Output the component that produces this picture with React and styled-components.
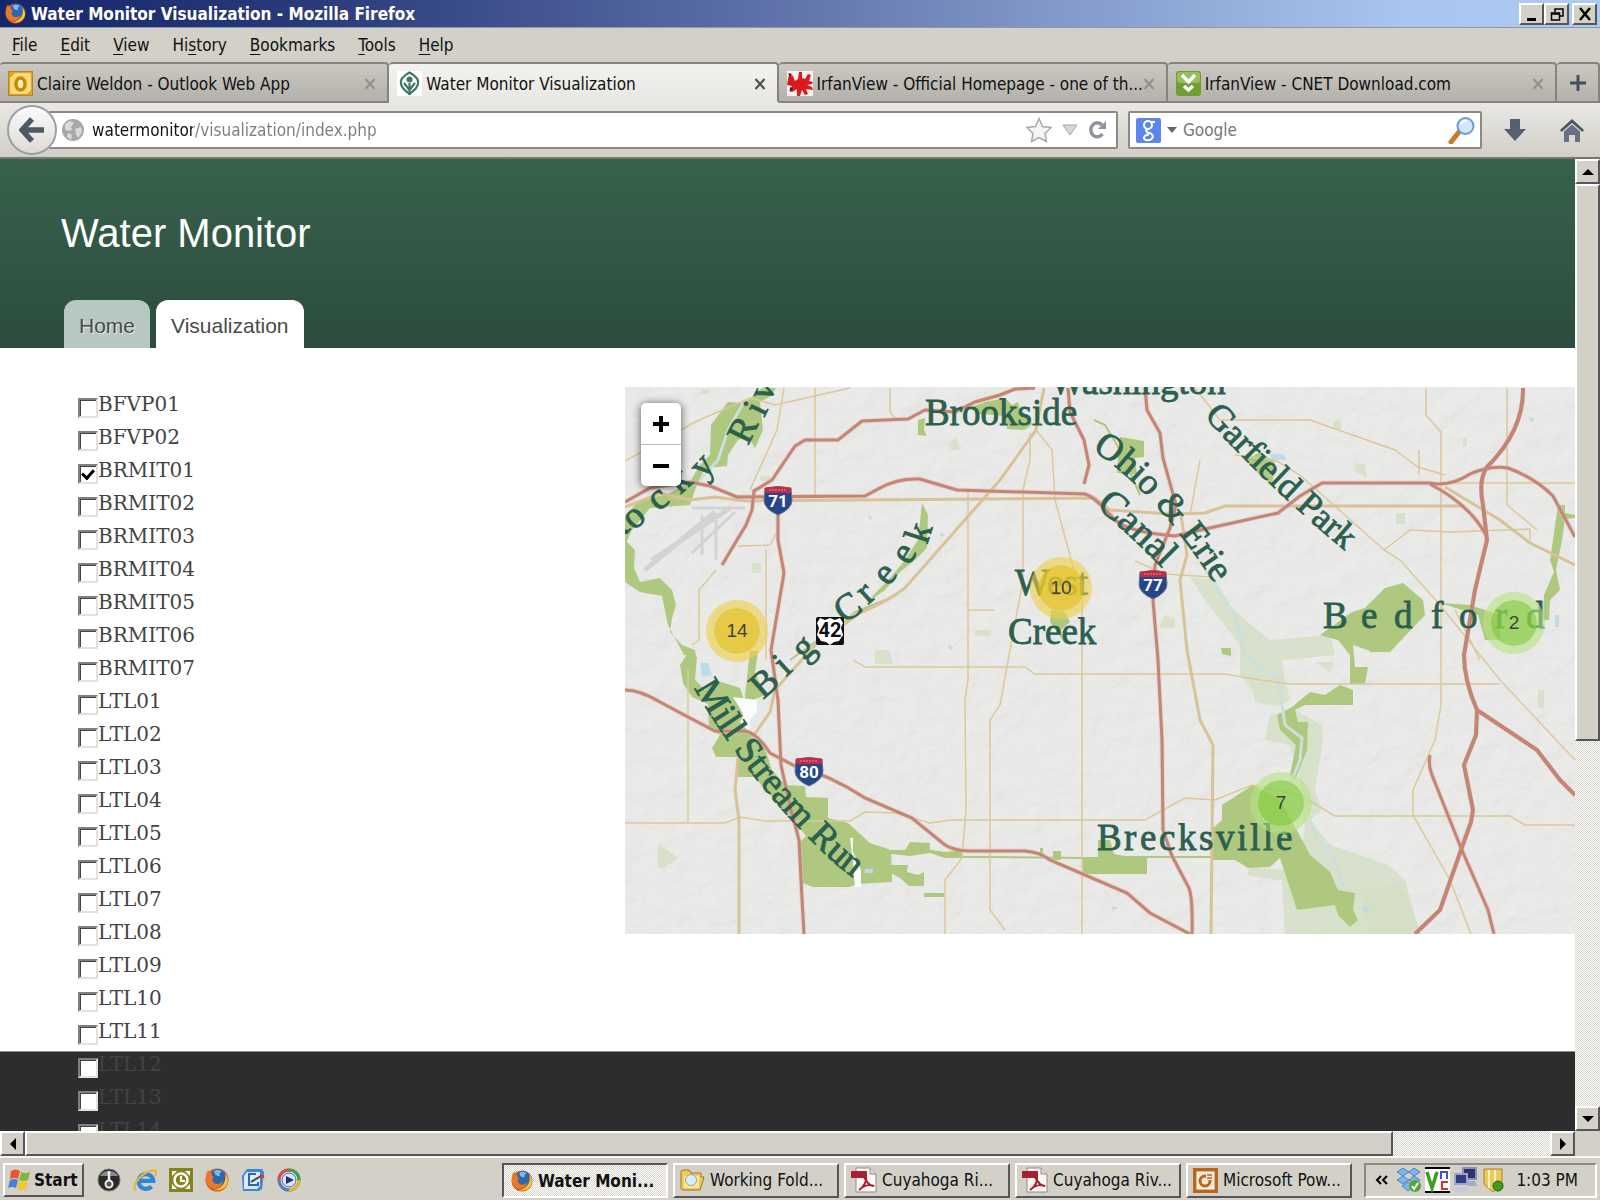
import React from "react";
import styled, { createGlobalStyle, css } from "styled-components";

const chromeFont = '"DejaVu Sans Condensed", "DejaVu Sans", sans-serif';
const face = "#d3d0c8";

const GlobalStyle = createGlobalStyle`
  * { box-sizing: border-box; }
  body { margin: 0; overflow: hidden; background: ${face}; font-family: ${chromeFont}; font-size: 17px; color: #111; }
  button { font: inherit; color: inherit; padding: 0; }
  svg { display: block; flex: none; }
`;

const raised = css`
  border: 2px solid;
  border-color: #fff #55555a #55555a #fff;
  background: ${face};
`;
const checker = css`
  background: repeating-conic-gradient(#ffffff 0 25%, #d6d3cb 0 50%) 0 0 / 2px 2px;
`;

const Desktop = styled.div`
  display: flex;
  flex-direction: column;
  height: 100vh;
`;

/* ---------- window chrome ---------- */
const TitleBar = styled.header`
  display: flex;
  align-items: center;
  gap: 5px;
  height: 28px;
  padding: 0 3px 0 5px;
  background: linear-gradient(90deg, #15266b 0%, #2a3b7c 20%, #5b6da5 46%, #8399c8 66%, #a9c6ee 88%, #accaf2 100%);
  border-bottom: 1px solid #8f97ad;
  color: #fff;
  font-weight: bold;
`;
const TitleText = styled.span`flex: 1; white-space: nowrap;`;
const WindowButtons = styled.div`display: flex;`;
const WindowButton = styled.button`
  ${raised}
  width: 25px;
  height: 22px;
  display: grid;
  place-items: center;
  margin-left: ${(p) => (p.$apart ? 3 : 0)}px;
`;
const MenuBar = styled.nav`
  display: flex;
  align-items: center;
  gap: 23px;
  height: 34px;
  padding: 0 12px;
  background: ${face};
`;
const MenuItem = styled.button`
  border: 0;
  background: none;
  u { text-underline-offset: 3px; }
`;
const TabStrip = styled.div`
  display: grid;
  grid-template-columns: repeat(4, minmax(0, 1fr)) 43px;
  height: 41px;
`;
const Tab = styled.div`
  display: flex;
  align-items: center;
  gap: 4px;
  padding: 2px 10px 0 8px;
  border: 2px solid #85837e;
  border-width: 2px 2px 2px 0;
  border-bottom-color: ${(p) => (p.$active ? "#e9e8e4" : "#85837e")};
  border-radius: 4px 4px 0 0;
  background: ${(p) => (p.$active ? "linear-gradient(#f2f2ef, #e8e7e3)" : "linear-gradient(#cbc8c1, #b3b1aa)")};
`;
const TabTitle = styled.button`
  flex: 1;
  min-width: 0;
  border: 0;
  background: none;
  text-align: left;
  white-space: nowrap;
`;
const TabClose = styled.button`
  border: 0;
  background: none;
  display: grid;
  place-items: center;
  width: 14px;
  height: 20px;
  color: ${(p) => (p.$active ? "#54544f" : "#94928c")};
`;
const NewTab = styled.button`
  border: 2px solid #85837e;
  border-left: 0;
  border-radius: 4px 4px 0 0;
  background: linear-gradient(#cbc8c1, #b3b1aa);
  display: grid;
  place-items: center;
`;
const NavBar = styled.div`
  display: flex;
  align-items: center;
  height: 56px;
  padding: 0 16px 0 7px;
  background: linear-gradient(#e9e8e4, #d2cfc7);
  border-bottom: 2px solid #77776f;
`;
const BackButton = styled.button`
  z-index: 1;
  width: 50px;
  height: 50px;
  margin-right: -9px;
  border: 2px solid #9ba0a8;
  border-radius: 50%;
  background: linear-gradient(#fbfbfa, #dcdad5);
  display: grid;
  place-items: center;
`;
const Field = styled.form`
  display: flex;
  align-items: center;
  height: 38px;
  border: 2px solid #8b8b86;
  border-radius: 2px;
  background: #fff;
`;
const UrlField = styled(Field)`flex: 1; padding: 0 8px 0 12px; gap: 8px;`;
const SearchField = styled(Field)`width: 354px; margin: 0 22px 0 10px; padding: 0 4px 0 6px; gap: 6px;`;
const FieldInput = styled.input`
  flex: 1;
  min-width: 0;
  border: 0;
  padding: 0;
  outline: 0;
  font: inherit;
  background: none;
  color: #777;
`;
const UrlInput = styled(FieldInput)`
  color: transparent;
  background: linear-gradient(90deg, #111 101px, #7d7d7d 101px);
  background-clip: text;
  -webkit-background-clip: text;
`;
const SearchInput = styled(FieldInput)`
  &::placeholder { color: #777; opacity: 1; }
`;
const IconButton = styled.button`
  border: 0;
  background: none;
  display: grid;
  place-items: center;
  min-width: ${(p) => p.$w || 20}px;
`;
const Gap = styled.span`width: 34px;`;

/* ---------- web page ---------- */
const Viewport = styled.div`
  flex: 1;
  min-height: 0;
  display: grid;
  grid-template-columns: minmax(0, 1fr) 25px;
`;
const Page = styled.div`
  display: flex;
  flex-direction: column;
  overflow: hidden;
  font-family: "Liberation Sans", Arial, sans-serif;
`;
const SiteHeader = styled.header`
  flex: none;
  display: flex;
  flex-direction: column;
  justify-content: space-between;
  height: 189px;
  padding: 50px 61px 0;
  background: linear-gradient(#37624c, #2c4c3c);
`;
const SiteTitle = styled.h1`
  margin: 0;
  font-size: 40px;
  line-height: 48px;
  font-weight: normal;
  color: #fff;
`;
const SiteNav = styled.nav`display: flex; gap: 6px; padding-left: 3px;`;
const SiteTab = styled.a`
  height: 48px;
  padding: 0 15px;
  line-height: 52px;
  font-size: 21px;
  border-radius: 12px 12px 0 0;
  text-decoration: none;
  color: #4a4a4a;
  background: ${(p) => (p.$active ? "#fff" : "#b7c8c2")};
  text-shadow: ${(p) => (p.$active ? "none" : "1px 1px 0 #e4ecea")};
`;
const Main = styled.main`
  flex: none;
  display: grid;
  grid-template-columns: 547px minmax(0, 1fr);
  height: 703px;
  padding: 39px 0 0 78px;
  background: #fff;
`;
const StationList = styled.ul`
  z-index: 1;
  margin: 0;
  padding: 0;
  list-style: none;
  font-family: "DejaVu Serif", serif;
  font-size: 20px;
  color: #434343;
`;
const Station = styled.label`
  display: flex;
  align-items: center;
  height: 33px;
`;
const Check = styled.input`
  appearance: none;
  width: 20px;
  height: 20px;
  margin: 9px 0 0;
  background: #fff;
  border: 2px solid;
  border-color: #808080 #e4e1da #e4e1da #808080;
  box-shadow: inset 1px 1px 0 #444;
  display: grid;
  place-items: center;
  &:checked::after {
    content: "";
    width: 5px;
    height: 9px;
    margin-bottom: 3px;
    border: solid #000;
    border-width: 0 3px 3px 0;
    transform: rotate(42deg);
  }
`;
const SiteFooter = styled.footer`
  flex: 1;
  background: #2d2d2d;
  border-top: 1px solid #8a8a8a;
`;
const MapPane = styled.section`
  position: relative;
  height: 547px;
  overflow: hidden;
  background: #e5e6e3;
`;
const ZoomControl = styled.div`
  position: absolute;
  left: 16px;
  top: 16px;
  width: 40px;
  border-radius: 5px;
  background: #fff;
  box-shadow: 0 1px 8px rgba(0, 0, 0, 0.65);
`;
const ZoomButton = styled.button`
  display: grid;
  place-items: center;
  width: 100%;
  height: 41px;
  border: 0;
  background: none;
  & + & { border-top: 1px solid #bbb; height: 42px; }
`;
const Cluster = styled.button`
  position: absolute;
  left: ${(p) => p.$x}px;
  top: ${(p) => p.$y}px;
  width: 62px;
  height: 62px;
  border: 8px solid ${(p) => (p.$warm ? "rgba(238,207,70,.6)" : "rgba(181,226,130,.6)")};
  border-radius: 50%;
  background: ${(p) => (p.$warm ? "rgba(229,196,40,.85)" : "rgba(140,208,75,.8)")};
  background-clip: padding-box;
  font-size: 19px;
  font-family: "Liberation Sans", Arial, sans-serif;
  color: #3f3f3f;
`;

/* ---------- scrollbars ---------- */
const VScroll = styled.div`display: flex; flex-direction: column; ${checker}`;
const HScroll = styled.div`
  display: grid;
  grid-template-columns: minmax(0, 1fr) 25px;
  height: 25px;
  background: ${face};
`;
const HTrack = styled.div`display: flex; ${checker}`;
const ScrollButton = styled.button`
  ${raised}
  flex: none;
  width: 25px;
  height: 25px;
  display: grid;
  place-items: center;
`;
const VThumb = styled.div`${raised} height: 557px;`;
const HThumb = styled.div`${raised} flex: 0 0 1368px;`;
const Spring = styled.div`flex: 1;`;

/* ---------- taskbar ---------- */
const TaskBar = styled.footer`
  display: flex;
  align-items: center;
  height: 44px;
  padding: 2px 3px 0;
  border-top: 2px solid #f6f5f2;
  background: ${face};
`;
const StartButton = styled.button`
  ${raised}
  display: flex;
  align-items: center;
  gap: 2px;
  width: 81px;
  height: 34px;
  padding-left: 2px;
  font-weight: bold;
`;
const QuickLaunch = styled.div`display: flex; gap: 12px; margin-left: 13px;`;
const Tasks = styled.div`
  display: flex;
  flex: 1;
  justify-content: flex-end;
  gap: 5px;
  margin-right: 12px;
`;
const Task = styled.button`
  ${raised}
  display: flex;
  align-items: center;
  gap: 5px;
  width: 166px;
  height: 35px;
  padding-left: 5px;
  white-space: nowrap;
  ${(p) => p.$active && css`
    ${checker}
    border-color: #55555a #fff #fff #55555a;
    font-weight: bold;
    padding-top: 2px;
    padding-left: 7px;
  `}
`;
const Tray = styled.div`
  display: flex;
  align-items: center;
  gap: 4px;
  width: 233px;
  height: 35px;
  padding: 0 17px 0 6px;
  border: 2px solid;
  border-color: #8c8a84 #fff #fff #8c8a84;
`;
const Clock = styled.time`margin-left: auto; white-space: nowrap;`;

/* ---------- icons ---------- */
const Firefox = ({ size = 22 }) => (
  <svg width={size} height={size} viewBox="0 0 24 24">
    <circle cx="12" cy="12" r="11.5" fill="#d9601a" />
    <circle cx="13" cy="9.5" r="8.5" fill="#2c68ac" />
    <path d="M9 3c3-2 7-1 8 1-2 0-3 2-2 4-2 0-4 0-5-2z" fill="#7fbbe8" />
    <path d="M1 8c0-3 1-5 3-6 0 2 1 3 3 3-1 2 0 3 2 4-2 1-2 4 0 6 3 2 7 1 9-2-1 5-6 8-10 7C3 19 0 14 1 8z" fill="#e8782a" />
    <path d="M20 5c3 4 4 9 1 13-3 4-8 5-12 4 8-1 13-8 11-17z" fill="#f7c63c" />
  </svg>
);
const Outlook = () => (
  <svg width="25" height="25" viewBox="0 0 25 25">
    <rect x="0.5" y="0.5" width="24" height="24" fill="#e6a51f" stroke="#b98427" />
    <path d="M3 22V7l4-4h15v16l-3 3z" fill="#f8d96a" stroke="#fff7d8" />
    <ellipse cx="12.500" cy="13" rx="4.500" ry="6" fill="#fff3c0" stroke="#c98708" strokeWidth="3.500" />
  </svg>
);
const Leaf = () => (
  <svg width="25" height="25" viewBox="0 0 25 25" fill="none" stroke="#3d7763" strokeWidth="2.200">
    <rect width="25" height="25" fill="#fff" stroke="none" />
    <path d="M12.500 1.500C19 5 22 9 21 13c-1 5-5 7-8.500 10C9 20 5 18 4 13 3 9 6 5 12.500 1.500z" />
    <path d="M12.500 24V12M12.500 19L7 12M12.500 19l5.500-7" />
    <circle cx="12.500" cy="8.500" r="3" fill="#3d7763" stroke="none" />
  </svg>
);
const Irfan = () => (
  <svg width="26" height="25" viewBox="0 0 26 25">
    <rect width="26" height="25" fill="#f6f2f0" />
    <path d="M2 3l4 2 2 5 3-2 1-7 3 0 0 6 3 1 3-5 3 1-2 6 4 1-1 2-5 1 5 2 1 3-7-1 2 5-3 1-3-5-2 6-3 0 0-7-5 3-3-1 3-5-5-1z" fill="#dc1a1d" />
    <path d="M1 2l4 1-2 2zM3 16l3 2-3 2z" fill="#222" />
  </svg>
);
const Cnet = () => (
  <svg width="25" height="25" viewBox="0 0 25 25">
    <rect width="25" height="25" rx="3" fill="#6f9e33" />
    <rect x="1" y="1" width="23" height="11" rx="3" fill="#96bf5a" />
    <path d="M6 4l6.500 7L19 4M8 15l4.500 4 4.500-4" fill="none" stroke="#fff" strokeWidth="3.500" />
  </svg>
);
const Cross = () => (
  <svg width="12" height="12" viewBox="0 0 12 12"><path d="M1.500 1l9 10M10.500 1l-9 10" stroke="currentColor" strokeWidth="2.200" /></svg>
);
const Triangle = ({ d }) => (
  <svg width="12" height="12" viewBox="0 0 12 12">
    <path d={{ up: "M6 3l6 6H0z", down: "M6 9l6-6H0z", left: "M3 6l6-6v12z", right: "M9 6L3 0v12z" }[d]} fill="#000" />
  </svg>
);
const Globe = () => (
  <svg width="22" height="22" viewBox="0 0 22 22">
    <circle cx="11" cy="11" r="11" fill="#a8a8a8" />
    <path d="M3 5l5-3 4 2-3 4 1 3-4 1-3-2zM13 10l6-2 1 5-4 6-2-4zM6 14l4 2-1 5-4-3z" fill="#dadada" />
  </svg>
);
const Pdf = () => (
  <svg width="26" height="26" viewBox="0 0 26 26">
    <path d="M5 1h14l6 6v18H5z" fill="#fdf8f8" stroke="#9b8487" />
    <path d="M19 1v6h6" fill="#ddd" stroke="#9b8487" />
    <rect x="0" y="4" width="16" height="7" fill="#a52233" />
    <path d="M13 10c2 4 5 9 10 9-5-2-11 0-15 4 5-3 8-9 7-14" fill="none" stroke="#a51f2e" strokeWidth="2" />
  </svg>
);

/* ---------- map artwork ---------- */
const highways = [
  "M1035 388L1015 389 1000 395 975 402 955 412 925 410 908 419 862 421 838 440 805 440 795 446 772 480 754 491 752 510 746 525 722 565",
  "M625 502L650 488 690 482 710 486 737 497 865 496 880 488Q898 478 920 479L957 490 1085 494Q1095 497 1113 518 1125 532 1175 536L1205 529 1278 513 1300 496 1322 483 1430 483Q1450 487 1470 474 1490 465 1508 468 1535 478 1553 496L1575 537",
  "M778 510V540L784 573 771 650 778 700 781 765 791 810 799 840 801 880 804 934",
  "M625 690Q640 690 660 702L690 718 715 731H745Q757 733 770 753L795 766Q830 775 865 798L912 818 945 845Q955 851 970 851H1025Q1040 852 1050 860L1127 893 1150 913 1190 934",
  "M1068 388L1070 412 1084 440 1089 465 1084 484",
  "M1145 388L1147 410 1160 433 1163 458 1176 505 1170 528 1155 565 1153 600 1158 660 1162 740 1163 830 1172 856 1189 888Q1193 900 1192 934",
  "M1430 755Q1428 765 1432 775L1461 848 1488 910 1494 934",
  "M1430 484Q1470 505 1486 535",
];
const freeways = [
  "M1523 388Q1524 430 1487 467 1478 480 1483 505L1487 540 1475 590 1464 655Q1464 680 1477 710L1476 735 1464 765 1473 810 1471 822 1461 850 1440 910 1415 934",
  "M1477 710L1537 750 1560 780 1575 795",
];
const streets = [
  "M625 461L695 422 750 398 775 405 850 388", "M784 388L777 430 750 490", "M815 388V500",
  "M890 388V412L895 418", "M968 492V680L965 700 966 810 962 858 945 880V934",
  "M1030 433V460L1023 490V580L1010 650 1000 705 990 720V910L1005 930",
  "M1036 430L1052 450 1055 500 1082 600V934",
  "M625 823H725L740 817 765 821H850L865 812 895 813 930 823 950 820H1145L1185 798 1215 800 1252 785 1300 795 1335 816H1510L1525 825H1575",
  "M853 660L865 667H1025L1035 674H1225L1260 680 1290 684H1500",
  "M688 670V822", "M1195 388L1220 420H1310L1395 450 1418 467 1445 475",
  "M1426 388V415L1441 432V705L1435 740 1413 790V815L1450 880 1471 934", "M1507 388V505L1537 530", "M1445 483H1575",
  "M1235 455L1275 460 1300 475 1384 550 1400 560 1440 605 1500 680 1575 760",
  "M1384 550L1410 530 1450 532 1530 529V540", "M1455 610L1480 660", "M778 530L770 545 738 546", "M766 550V660",
  "M716 570L699 590V640L692 645", "M1419 450V475M1200 460L1190 515M1135 561L1165 574 1210 577", "M968 610H994",
];
const arterials = [
  "M625 507L660 493 690 500 715 497 745 501 1095 498 1110 510 1170 514 1205 513 1225 506H1465",
  "M1044 388L1036 430 1000 480 905 588Q890 600 860 613L815 645 775 690 770 712 752 738",
  "M1181 515L1187 555 1180 580 1187 650 1200 720 1213 745 1211 934",
  "M738 758L735 790 739 820V934", "M1445 487L1500 520 1530 543 1575 565",
];
const parks = [
  "M776 388L771 396 760 402 763 430 755 448 748 436 738 440 728 455 727 466 705 468 695 490 690 505 650 508 632 530 625 545V515L640 500 668 494 690 482 700 465 710 455 711 425 728 402 745 403 762 388z",
  "M625 540L635 550 634 568 640 582 660 578 672 590 676 605 672 618 670 632 682 645 695 650 696 656 684 655 668 625 662 596 640 592 625 582z",
  "M690 650L697 657 695 680 705 690 715 680 740 688 744 700 737 700 745 720 750 733 765 748 772 770 785 785 805 786 806 797 828 798V818L848 823 870 843 891 850 892 882 857 884 850 887H813L800 882 800 842 806 836 785 810 765 790 755 777H738V757H716L712 748 720 735 709 728 708 704 692 697 683 683 680 665z",
  "M750 651L758 651 755 672 765 695 745 703 745 695z",
  "M891 850H905L910 842 930 843V850L945 852 963 850V858L945 858 930 853 910 856 891 854z",
  "M891 865H908L907 872 918 875 924 872V886H909L900 878 891 873z", "M924 893h20v4h-20z",
  "M922 503L928 515 927 548 915 560 900 572 885 590 865 604 890 578 905 560 918 540z",
  "M918 420L925 418 924 430 927 436 918 435z",
  "M968 408L985 402 1005 398 1012 405 1018 402 1022 415 1033 424 1024 430 1007 429 1005 416 980 414z",
  "M1051 610L1065 612 1070 622 1061 630 1066 645 1050 622z",
  "M1120 437L1144 441V457L1135 458 1137 475 1117 473 1118 458z", "M1245 460L1260 452 1275 462 1272 485 1260 475z",
  "M1320 635L1352 612 1365 608 1385 588 1403 583 1423 600 1425 615 1390 652 1373 652 1353 645 1355 667H1368L1365 684H1350V655L1338 640z",
  "M1440 603L1470 605 1500 615 1500 640 1485 640 1478 615z",
  "M1558 505H1565V513L1575 515V518L1565 519 1562 540 1556 570 1560 590 1550 600 1549 620 1543 620 1544 595 1554 572 1550 560 1553 540z",
  "M1292 707L1310 692 1325 695 1340 685 1353 690V705H1305L1295 710 1298 722 1308 722 1307 750 1295 780 1290 775 1296 745 1280 730 1277 715z",
  "M1222 805L1253 785 1280 800 1305 845 1310 855 1330 872 1338 890 1355 893 1353 910 1358 920 1350 927 1338 915 1335 905 1297 910 1280 858 1270 867 1248 868 1235 860H1213V828L1222 820z",
  "M1083 857H1098V840H1110L1114 854 1125 856H1147V874H1083z", "M1221 648h10v8l-9-2z", "M1370 648h18v4h-18z",
  "M1040 848h3v8h-3zM1053 851h8v9h-8z",
];
const palePatches = [
  "M1190 577L1215 580 1230 605 1245 620 1270 640 1330 635 1335 655 1282 660 1285 680 1290 700 1278 706 1255 702 1252 690 1240 675 1240 645 1205 600z",
  "M1295 710L1322 725 1323 740 1315 790 1322 810 1310 820 1330 845 1360 855 1388 865 1405 880 1420 934H1285L1282 880 1275 880 1247 875 1250 868 1297 870 1305 830 1300 780 1290 745 1265 740 1270 715z",
  "M1400 885L1422 934H1370L1360 890z", "M875 650h14l4 14h-18z", "M658 844l21 14-16 10h-5z",
  "M1165 615l10 4v9h-16z", "M1316 662h18l-4 11z", "M1538 690h6v18h-6z", "M1396 513h9v11h-9z", "M948 445l8-8 4 12-8 2z",
  "M752 563h9v10h-9zM701 389h8v5h-8zM760 476h10v5h-10zM1333 422l8-2v9h-8zM1355 464l10 0 2 14-12-6zM1463 438h4v9h-4zM975 630h16v6h-16z",
];
const waters = [
  "M700 663l8 0 4 12-10 2zM865 869h8v4h-8zM1270 454h14l2 6h-14zM1528 417l6 2-2 4zM1362 906l8 2-6 6zM1555 615l4 0v12h-4zM868 515l5 3-3 2zM940 532l5 3-4 2zM1112 906l6 2-5 3zM948 644l6 4-4 2z",
];

const shade = "#2b604e";
const Shield = ({ x, y, n }) => (
  <g transform={`translate(${x} ${y})`}>
    <path d="M1 1Q14 -2 27 1L28 13Q28 22 14 28Q0 22 0 13z" fill="#25468a" stroke="#6d7486" />
    <path d="M1 1Q14 -2 27 1V6H1z" fill="#c22b45" />
    <path d="M5 3h18" stroke="#e08a98" strokeDasharray="2 1" />
    <text x="14" y="20" textAnchor="middle" fontFamily="Roboto, sans-serif" fontWeight="bold" fontSize="17" fill="#fff">{n}</text>
  </g>
);

const MapArt = () => (
  <svg width="100%" height="547" viewBox="625 387 950 547" preserveAspectRatio="xMinYMin slice" role="img" aria-label="Map of monitoring stations">
    <defs>
      <filter id="relief" x="0" y="0" width="100%" height="100%">
        <feTurbulence type="fractalNoise" baseFrequency="0.04 0.05" numOctaves="5" seed="8" />
        <feDiffuseLighting surfaceScale="3" lightingColor="#fff"><feDistantLight azimuth="225" elevation="60" /></feDiffuseLighting>
      </filter>
      <path id="mill" d="M694 688Q735 760 797 826T872 882" />
      <path id="ohio" d="M1092 450Q1155 490 1220 592" />
      <path id="canal" d="M1096 507Q1125 530 1172 578" />
      <path id="garfield" d="M1204 416Q1262 482 1358 562" />
    </defs>
    <rect x="625" y="387" width="950" height="547" fill="#e8e9e7" />
    <rect x="625" y="387" width="950" height="547" filter="url(#relief)" opacity="0.15" />
    <g fill="#d3dfc3">{palePatches.map((d) => <path key={d} d={d} opacity="0.8" />)}</g>
    <g fill="none" stroke="#d2d3d4" strokeWidth="5">
      <path d="M652 560L730 508M645 570L715 512" />
      <path d="M692 508H745M702 515V555M716 520V560M692 553L735 512" strokeWidth="3" />
    </g>
    <g fill="#aec87f">{parks.map((d) => <path key={d} d={d} />)}</g>
    <path d="M890 852L930 851 965 857 985 857 1083 858M1147 857H1213M1094 420L1105 425 1120 450 1140 495M825 640L855 612 885 600M790 660L825 635" fill="none" stroke="#aec87f" strokeWidth="2" />
    <g fill="none" stroke="#cbe0dc" strokeWidth="3">
      <path d="M745 400L728 430 718 460 700 480M1205 570L1235 615 1245 655 1278 680 1282 705 1285 725 1302 738 1300 760 1292 780M1310 820L1318 840 1335 860 1345 890" />
    </g>
    <path d="M733 697L757 700 757 712 750 720 749 732 740 722 744 715zM850 838l3 0v14l8 18v17h-6l-2-25z" fill="#fbfcfa" />
    <g fill="#bcdcec">{waters.map((d) => <path key={d} d={d} />)}</g>
    <g fill="none" stroke="#dcc899" strokeWidth="1.500">{streets.map((d) => <path key={d} d={d} />)}</g>
    <g fill="none" stroke="#d8c296" strokeWidth="3">{arterials.map((d) => <path key={d} d={d} />)}</g>
    <g fill="none" stroke="#e5c0b0" strokeWidth="5" opacity="0.5">{highways.concat(freeways).map((d) => <path key={d} d={d} />)}</g>
    <g fill="none" stroke="#c38575" strokeWidth="3">{highways.map((d) => <path key={d} d={d} />)}</g>
    <g fill="none" stroke="#c38575" strokeWidth="4">{freeways.map((d) => <path key={d} d={d} />)}</g>
    <g fill={shade} stroke={shade} strokeWidth="0.800" fontFamily='"Liberation Serif", "Times New Roman", serif' fontSize="37">
      <text x="1050" y="394">Washington</text>
      <text x="925" y="425">Brookside</text>
      <text x="1015" y="595">West</text>
      <text x="1008" y="644">Creek</text>
      <text x="1323 1361 1394 1431 1459 1495 1526" y="628">Bedford</text>
      <text x="1097 1124 1140 1159 1178 1199 1216 1237 1250 1263 1276" y="850">Brecksville</text>
      <text x="615 634 658 680 704" y="548 531 512 495 480" rotate="-50 -42 -38 -42 -48">Rocky</text>
      <text x="748 764 769" y="446 418 403" rotate="-64">Riv</text>
      <text x="763 786 804" y="700 677 662" rotate="-42">Big</text>
      <text x="844 868 888 909 927" y="624 605 587 566 545" rotate="-34 -42 -50 -58 -72">Creek</text>
      <text fontSize="37"><textPath href="#mill">Mill Stream Run</textPath></text>
      <text fontSize="37"><textPath href="#ohio">Ohio &amp; Erie</textPath></text>
      <text fontSize="39"><textPath href="#canal">Canal</textPath></text>
      <text fontSize="36"><textPath href="#garfield">Garfield Park</textPath></text>
    </g>
    <Shield x={764} y={487} n="71" />
    <Shield x={1139} y={571} n="77" />
    <Shield x={795} y={758} n="80" />
    <rect x="816" y="617" width="28" height="28" rx="2" fill="#111" />
    <path d="M820 618l5 2 5-2 5 2 5-2 3 5-2 5 2 7-4 6-5 1-4 3-4-3-5-1-4-6 2-7-2-5z" fill="#fff" />
    <text x="830" y="637" textAnchor="middle" fontFamily="Roboto, sans-serif" fontWeight="bold" fontSize="20" fill="#111">42</text>
  </svg>
);

const stations = [
  "BFVP01", "BFVP02", "BRMIT01", "BRMIT02", "BRMIT03", "BRMIT04", "BRMIT05", "BRMIT06", "BRMIT07",
  "LTL01", "LTL02", "LTL03", "LTL04", "LTL05", "LTL06", "LTL07", "LTL08", "LTL09", "LTL10", "LTL11",
  "LTL12", "LTL13", "LTL14",
];
const menus = [["", "F", "ile"], ["", "E", "dit"], ["", "V", "iew"], ["Hi", "s", "tory"], ["", "B", "ookmarks"], ["", "T", "ools"], ["", "H", "elp"]];
const tabs = [
  { title: "Claire Weldon - Outlook Web App", icon: <Outlook /> },
  { title: "Water Monitor Visualization", icon: <Leaf />, active: true },
  { title: "IrfanView - Official Homepage - one of th...", icon: <Irfan /> },
  { title: "IrfanView - CNET Download.com", icon: <Cnet /> },
];

const Chrome = () => (
  <>
    <TitleBar>
      <Firefox size={21} />
      <TitleText>Water Monitor Visualization - Mozilla Firefox</TitleText>
      <WindowButtons>
        <WindowButton aria-label="Minimize"><svg width="14" height="14"><path d="M2 11h9v3H2z" /></svg></WindowButton>
        <WindowButton aria-label="Restore">
          <svg width="14" height="14" fill="none" stroke="#000" strokeWidth="1.500"><path d="M5 5V2h8v7h-3M5 2h8M1.500 6h8v7h-8zM1 7h9" /></svg>
        </WindowButton>
        <WindowButton $apart aria-label="Close"><svg width="14" height="14"><path d="M2 1l10 12M12 1L2 13" stroke="#000" strokeWidth="2.500" /></svg></WindowButton>
      </WindowButtons>
    </TitleBar>
    <MenuBar>
      {menus.map(([a, u, b]) => <MenuItem key={u + b}>{a}<u>{u}</u>{b}</MenuItem>)}
    </MenuBar>
    <TabStrip>
      {tabs.map((t) => (
        <Tab key={t.title} $active={t.active}>
          {t.icon}
          <TabTitle>{t.title}</TabTitle>
          <TabClose $active={t.active} aria-label={`Close ${t.title}`}><Cross /></TabClose>
        </Tab>
      ))}
      <NewTab aria-label="New tab"><svg width="18" height="18"><path d="M9 1v16M1 9h16" stroke="#42505f" strokeWidth="3" /></svg></NewTab>
    </TabStrip>
    <NavBar>
      <BackButton aria-label="Back">
        <svg width="26" height="26" viewBox="0 0 26 26"><path d="M13 2L3 13l10 11M4 13h21" fill="none" stroke="#4d5865" strokeWidth="5.500" /></svg>
      </BackButton>
      <UrlField>
        <Globe />
        <UrlInput aria-label="Address" defaultValue="watermonitor/visualization/index.php" />
        <IconButton type="button" aria-label="Bookmark">
          <svg width="26" height="26" viewBox="0 0 26 26"><path d="M13 1.500l3.500 8 8.500 1-6 6 1.500 8-7.500-4-7.500 4 1.500-8-6-6 8.500-1z" fill="#f4f4f4" stroke="#a9a9a9" strokeWidth="1.500" /></svg>
        </IconButton>
        <IconButton type="button" aria-label="History"><svg width="16" height="12"><path d="M1 1h14L8 11z" fill="#d4d7dc" stroke="#a2a7af" /></svg></IconButton>
        <IconButton type="button" aria-label="Reload">
          <svg width="20" height="20" viewBox="0 0 20 20"><path d="M14.500 14A6.500 7 0 1 1 14 5" fill="none" stroke="#8f949c" strokeWidth="3.500" /><path d="M18 1v8h-8z" fill="#8f949c" /></svg>
        </IconButton>
      </UrlField>
      <SearchField>
        <svg width="25" height="25" viewBox="0 0 25 25">
          <rect width="25" height="25" rx="2" fill="#5a86ee" />
          <g fill="none" stroke="#fff" strokeWidth="2"><ellipse cx="12" cy="7" rx="4" ry="4" /><path d="M15 4h4M12 11c-3 1-2 3 0 3.500 4 1 6 3 4 6-2 3-9 2-8-1 1-3 3-3 5-3" /></g>
        </svg>
        <svg width="10" height="10"><path d="M0 2h10L5 8z" fill="#666" /></svg>
        <SearchInput aria-label="Search" placeholder="Google" />
        <IconButton type="button" aria-label="Search" $w={26}>
          <svg width="28" height="28" viewBox="0 0 28 28"><path d="M11 16L3 26" stroke="#c8792a" strokeWidth="5" strokeLinecap="round" /><circle cx="17.500" cy="10" r="8" fill="#cfe6fb" stroke="#6f9bd0" strokeWidth="2" /><path d="M13 8q2-4 6-3" fill="none" stroke="#fff" strokeWidth="2" /></svg>
        </IconButton>
      </SearchField>
      <IconButton aria-label="Downloads">
        <svg width="22" height="22" viewBox="0 0 22 22"><path d="M6 0h10v10h6L11 22 0 10h6z" fill="#56616f" /></svg>
      </IconButton>
      <Gap />
      <IconButton aria-label="Home">
        <svg width="24" height="23" viewBox="0 0 24 23"><path d="M12 0l12 11-1.500 2L12 4 1.500 13 0 11z" fill="#4c5764" /><path d="M12 5.500l8 7V23h-5v-7H9v7H4V12.500z" fill="#667181" /></svg>
      </IconButton>
    </NavBar>
  </>
);

export default function App() {
  return (
    <Desktop>
      <GlobalStyle />
      <Chrome />
      <Viewport>
        <Page>
          <SiteHeader>
            <SiteTitle>Water Monitor</SiteTitle>
            <SiteNav>
              <SiteTab href="#home">Home</SiteTab>
              <SiteTab href="#visualization" $active>Visualization</SiteTab>
            </SiteNav>
          </SiteHeader>
          <Main>
            <StationList>
              {stations.map((s) => (
                <li key={s}><Station><Check type="checkbox" defaultChecked={s === "BRMIT01"} />{s}</Station></li>
              ))}
            </StationList>
            <MapPane>
              <MapArt />
              <Cluster $x={81} $y={213} $warm>14</Cluster>
              <Cluster $x={405} $y={170} $warm>10</Cluster>
              <Cluster $x={858} $y={205}>2</Cluster>
              <Cluster $x={625} $y={385}>7</Cluster>
              <ZoomControl>
                <ZoomButton aria-label="Zoom in"><svg width="18" height="18"><path d="M9 1v16M1 9h16" stroke="#000" strokeWidth="4" /></svg></ZoomButton>
                <ZoomButton aria-label="Zoom out"><svg width="18" height="18"><path d="M1 9h16" stroke="#000" strokeWidth="4" /></svg></ZoomButton>
              </ZoomControl>
            </MapPane>
          </Main>
          <SiteFooter />
        </Page>
        <VScroll>
          <ScrollButton aria-label="Scroll up"><Triangle d="up" /></ScrollButton>
          <VThumb />
          <Spring />
          <ScrollButton aria-label="Scroll down"><Triangle d="down" /></ScrollButton>
        </VScroll>
      </Viewport>
      <HScroll>
        <HTrack>
          <ScrollButton aria-label="Scroll left"><Triangle d="left" /></ScrollButton>
          <HThumb />
          <Spring />
          <ScrollButton aria-label="Scroll right"><Triangle d="right" /></ScrollButton>
        </HTrack>
      </HScroll>
      <TaskBar>
        <StartButton>
          <svg width="25" height="24" viewBox="0 0 25 24">
            <path d="M4 3q5-3 9 0l-2 8q-4-2-8 0z" fill="#e8562a" /><path d="M14 4q4 2 9 0l-2 8q-5 2-9 0z" fill="#83b83c" />
            <path d="M3 12q4-2 8 0l-2 8q-4-2-8 0z" fill="#4a7fe0" /><path d="M12 13q4 2 9 0l-2 8q-5 2-9 0z" fill="#f3c52e" />
          </svg>
          Start
        </StartButton>
        <QuickLaunch>
          <IconButton aria-label="Key" $w={24}>
            <svg width="24" height="24" viewBox="0 0 24 24"><circle cx="12" cy="12" r="11" fill="#2a2a2a" stroke="#777" /><path d="M3 8a10 9 0 0 1 18 0z" fill="#8a8a8a" /><path d="M12 3v10" stroke="#eee" strokeWidth="2.500" /><circle cx="12" cy="16" r="3.500" fill="#555" stroke="#eee" strokeWidth="2" /></svg>
          </IconButton>
          <IconButton aria-label="Internet Explorer" $w={24}>
            <svg width="24" height="24" viewBox="0 0 26 24" fill="none"><path d="M7 13h15a8 8 0 1 0-2 6" stroke="#2f86d8" strokeWidth="4.500" /><path d="M3 23C-3 16 14 0 24 2c2 1 1 4 0 6" stroke="#e9b62f" strokeWidth="2.500" /></svg>
          </IconButton>
          <IconButton aria-label="Calendar" $w={24}>
            <svg width="24" height="24" viewBox="0 0 24 24"><rect width="24" height="24" fill="#84841e" /><path d="M3 8V3h5zM16 3h5v5zM21 16v5h-5zM8 21H3v-5z" fill="#fff" /><circle cx="12" cy="12" r="6.500" fill="none" stroke="#fff" strokeWidth="2.500" /><path d="M12 8v5h4" fill="none" stroke="#fff" strokeWidth="2" /></svg>
          </IconButton>
          <IconButton aria-label="Firefox" $w={24}><Firefox size={24} /></IconButton>
          <IconButton aria-label="Show desktop" $w={24}>
            <svg width="24" height="24" viewBox="0 0 24 24"><path d="M6 1h15l2 3-2 17-3 2H2L1 8z" fill="#3f86d8" /><path d="M3 8l3-4h13v14l-3 3H3z" fill="#d9e9fa" /><path d="M15 6H8v11h9v-3" fill="none" stroke="#2b67b8" strokeWidth="2" /><path d="M10 14l10-6" stroke="#444" strokeWidth="2" /><path d="M19 9l4-1" stroke="#d43c20" strokeWidth="3" /></svg>
          </IconButton>
          <IconButton aria-label="Media Player" $w={24}>
            <svg width="24" height="24" viewBox="0 0 24 24" fill="none"><circle cx="12" cy="12" r="10" fill="#e8effa" stroke="#5878b8" strokeWidth="3" /><path d="M12 2a10 10 0 0 1 10 10" stroke="#4a9c48" strokeWidth="3" /><path d="M22 12a10 10 0 0 1-10 10" stroke="#e6b32e" strokeWidth="3" /><path d="M2 12A10 10 0 0 1 12 2" stroke="#d05348" strokeWidth="3" /><circle cx="12" cy="12" r="7" fill="#dfe9f8" stroke="#3b62b8" /><path d="M9 8l8 4-8 4z" fill="#1c2f86" /></svg>
          </IconButton>
        </QuickLaunch>
        <Tasks>
          <Task $active><Firefox size={22} />Water Moni...</Task>
          <Task>
            <svg width="25" height="24" viewBox="0 0 25 24"><path d="M1 4q0-2 2-2h6l2 3h10v4h3l-4 13H3q-2 0-2-2z" fill="#f0cb55" stroke="#9a7622" /><path d="M4 8h15v12H4z" fill="#fbe793" /><circle cx="11" cy="12" r="5.500" fill="#d8effa" stroke="#8aa6b8" /></svg>
            Working Fold...
          </Task>
          <Task><Pdf />Cuyahoga Ri...</Task>
          <Task><Pdf />Cuyahoga Riv...</Task>
          <Task>
            <svg width="25" height="25" viewBox="0 0 25 25"><rect width="25" height="25" fill="#bb661d" /><rect x="4" y="4" width="17" height="17" fill="#f8e9d8" stroke="#fff" /><circle cx="12" cy="13" r="5" fill="none" stroke="#bb661d" strokeWidth="3" /><path d="M13 5h6v7h-6z" fill="#f8e9d8" /><path d="M14 7h5M14 10h5" stroke="#bb661d" strokeWidth="1.500" /></svg>
            Microsoft Pow...
          </Task>
        </Tasks>
        <Tray>
          <IconButton aria-label="Show hidden icons"><svg width="14" height="10" fill="none" stroke="#000" strokeWidth="2"><path d="M6 1L2 5l4 4M12 1L8 5l4 4" /></svg></IconButton>
          <svg width="25" height="26" viewBox="0 0 25 26"><path d="M7 1l6 4-6 4-6-4zM18 1l6 4-6 4-5-4zM7 9l6 4-6 4-6-4zM18 9l6 4-6 4-5-4zM12 15l6 4-6 5-6-5z" fill="#7db6ea" stroke="#4a86c0" /><circle cx="19" cy="19" r="6" fill="#52a43c" /><path d="M16 19l2 3 4-6" fill="none" stroke="#fff" strokeWidth="2" /></svg>
          <svg width="25" height="26" viewBox="0 0 25 26"><rect width="25" height="26" fill="#fff" /><path d="M0 1h25M0 25h25" stroke="#000" strokeWidth="2" /><path d="M2 5l5 16 5-16" fill="none" stroke="#3d9a28" strokeWidth="3.500" /><path d="M16 12V5h6v7" fill="none" stroke="#3b55d8" strokeWidth="2" /><path d="M23 15h-6v7h6" fill="none" stroke="#d83434" strokeWidth="2" /></svg>
          <svg width="25" height="26" viewBox="0 0 25 26"><rect x="9" y="1" width="13" height="11" fill="#2c3470" stroke="#8b8fb8" strokeWidth="2" /><path d="M13 14h8l2 5h-9z" fill="#a8a9c4" /><rect x="1" y="7" width="12" height="10" fill="#343d80" stroke="#9fa3c8" strokeWidth="2" /><path d="M2 20h10l2 5H0z" fill="#c9c9dc" /></svg>
          <svg width="22" height="26" viewBox="0 0 22 26"><path d="M1 2h18v15l-9 8-9-8z" fill="#ecc95a" stroke="#a98422" /><path d="M6 3v18M12 3v18" stroke="#fff1b8" strokeWidth="2" /><circle cx="15" cy="19" r="5" fill="#3f9c1f" stroke="#236010" /></svg>
          <Clock>1:03 PM</Clock>
        </Tray>
      </TaskBar>
    </Desktop>
  );
}
